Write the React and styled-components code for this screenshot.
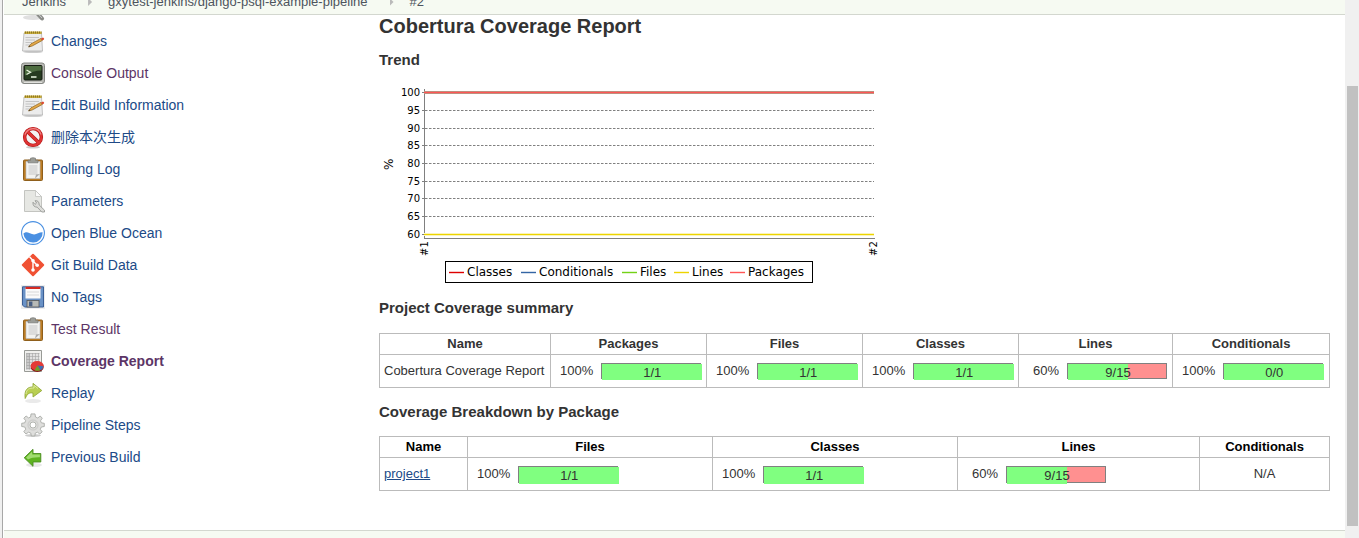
import React from 'react';
import styled, { createGlobalStyle } from 'styled-components';

const Global = createGlobalStyle`
  *, *::before, *::after { box-sizing: border-box; }
  body {
    margin: 0;
    background: #fff;
    color: #333;
    font: 13px/16px "Liberation Sans", Arial, "Noto Sans CJK SC", sans-serif;
  }
`;

const Shell = styled.div`
  display: grid;
  grid-template-columns: minmax(0, 1fr) 14px;
  min-height: 100vh;
  padding-left: 2px;
  background: #f0f0f0;
`;

const Page = styled.div`
  display: flex;
  flex-direction: column;
  padding-left: 1px;
  border-left: 1px solid #a8a8a8;
  background: #fff;
`;

const Breadcrumbs = styled.nav`
  display: flex;
  align-items: flex-end;
  height: 15px;
  padding: 0 18px 4px;
  overflow: hidden;
  background: #f6faf2;
  border-bottom: 1px solid #d3d7cf;
`;

const Crumb = styled.a`
  color: #4d545d;
  text-decoration: none;
`;

const CrumbArrow = styled.span`
  width: 4px;
  height: 8px;
  margin: 0 16px 4px 22px;
  background: #bababa;
  clip-path: polygon(0 0, 100% 50%, 0 100%);
`;

const Body = styled.div`
  display: grid;
  grid-template-columns: 358px minmax(0, 1fr);
  flex: 1;
`;

const Tasks = styled.nav`
  display: flex;
  flex-direction: column;
  padding-left: 17px;
`;

const Task = styled.a`
  display: flex;
  align-items: center;
  gap: 6px;
  height: 32px;
  font-size: 14px;
  font-weight: ${p => (p.$bold ? 700 : 400)};
  color: ${p => (p.$visited ? '#5c3566' : '#204a87')};
  text-decoration: none;
`;

const ScrolledTask = styled.a`
  display: flex;
  align-items: flex-end;
  height: 10px;
  padding-bottom: 4px;
  overflow: hidden;
`;

const Icon = styled.svg`
  width: 24px;
  height: 24px;
  flex: none;
`;

const Main = styled.main`
  padding: 0 15px 39px 17px;
`;

const Title = styled.h1`
  margin: 0;
  font-size: 20px;
  line-height: 22px;
`;

const Heading = styled.h2`
  margin: ${p => p.$top}px 0 ${p => p.$bottom}px;
  font-size: 15px;
  line-height: 18px;
`;

const Chart = styled.svg`
  display: block;
  width: 500px;
  height: 210px;
  font-family: "DejaVu Sans", sans-serif;
`;

const Table = styled.table`
  width: 100%;
  table-layout: fixed;
  border-collapse: collapse;
`;

const Th = styled.th`
  height: 21px;
  padding: 0 4px;
  border: 1px solid #bbb;
  color: ${p => (p.$dark ? '#000' : '#333')};
`;

const Td = styled.td`
  height: 33px;
  padding: 0 4px;
  border: 1px solid #bbb;
  white-space: nowrap;
  text-align: ${p => (p.$center ? 'center' : 'left')};
`;

const PackageLink = styled.a`
  color: #204a87;
  text-decoration: underline;
`;

const Coverage = styled.div`
  display: flex;
  align-items: center;
  gap: 8px;
  padding-left: 5px;
`;

const Percent = styled.span`
  min-width: 31px;
  text-align: right;
`;

const Bar = styled.div`
  width: 100px;
  height: ${p => p.$height}px;
  border: 1px solid #808080;
  background: #ff9090;
`;

const Fill = styled.div`
  height: ${p => p.$height}px;
  background: #80ff80;
`;

const Ratio = styled.div`
  width: 100px;
  line-height: 17px;
  text-align: center;
`;

const Footer = styled.footer`
  height: 8px;
  background: #f6faf2;
  border-top: 1px solid #d3d7cf;
`;

const Track = styled.div`
  position: sticky;
  top: 0;
  display: grid;
  grid-template-rows: 86fr 440fr 12fr;
  height: 100vh;
  padding: 0 1px 0 2px;
  background: #f0f0f0;
`;

const Thumb = styled.div`
  grid-row: 2;
  background: #c1c1c1;
`;

const Notepad = () => (
  <Icon viewBox="0 0 24 24">
    <ellipse cx="12" cy="22.8" rx="10" ry="1.2" fill="#ccc" />
    <path d="M3 4H20.5L21.5 22H1.5Z" fill="#ececec" stroke="#b4b4b4" strokeWidth=".8" />
    <path d="M3.5 2.4H20.5V5H3.3Z" fill="#c9ae3c" />
    <path d="M4 3.4H20.5" stroke="#8d7724" strokeWidth="2" strokeDasharray="1 1" />
    <path d="M4.5 8.5H18M4.5 11H14M4.5 13.5H11M4.5 16H9" stroke="#c4c4c4" />
    <path d="M7.5 18L10 14.8 20 9.4 21.3 11.4 11.2 17Z" fill="#e3a848" stroke="#8b6220" strokeWidth=".7" />
    <path d="M20 9.4L22 8.4Q23.8 9.1 23 10.5L21.3 11.4Z" fill="#dc4a32" />
    <path d="M7.5 18L8.7 16.5 9.3 17.5Z" fill="#333" />
  </Icon>
);

const Terminal = () => (
  <Icon viewBox="0 0 24 24">
    <rect x=".5" y="2" width="23" height="20.5" rx="2.5" fill="#b9bab5" stroke="#858783" />
    <rect x="3" y="4.5" width="18" height="14.5" rx="1" fill="#263b20" stroke="#151b12" />
    <path d="M4 5H20.5V9.5Q12 9.5 4 14.5Z" fill="#4d6c40" />
    <path d="M5.5 9L9.5 11.3 5.5 13.5M10 16H15.5" fill="none" stroke="#e9f5df" strokeWidth="1.3" />
    <path d="M3 21.4H21" stroke="#e5e5e2" />
  </Icon>
);

const Forbidden = () => (
  <Icon viewBox="0 0 24 24">
    <ellipse cx="12" cy="22.2" rx="7" ry="1.4" fill="#ccc" />
    <circle cx="12" cy="12" r="8.4" fill="#f3f3f3" stroke="#b01515" strokeWidth="3.4" />
    <path d="M6 6.2L18 17.8" stroke="#b01515" strokeWidth="3.6" />
    <circle cx="12" cy="12" r="8.4" fill="none" stroke="#df3434" strokeWidth="2.2" />
    <path d="M6 6.2L18 17.8" stroke="#df3434" strokeWidth="2.4" />
    <path d="M4 9.5Q6 4 12 3.6T20 9.5" fill="none" stroke="#ee8585" strokeWidth="1.2" />
  </Icon>
);

const Clipboard = () => (
  <Icon viewBox="0 0 24 24">
    <rect x="2.5" y="3" width="19" height="20.5" rx="1" fill="#bd7d24" stroke="#8f5f1c" />
    <path d="M5 4.5H19V21.5H5Z" fill="#f3f3f1" stroke="#bbb" strokeWidth=".7" />
    <path d="M7.5 8H16.5V18H7.5Z" fill="#dcdcdc" />
    <path d="M14 21.5L15 17.5 19 17Z" fill="#aaa" />
    <path d="M7 5.8V3.2H9.5V1.2Q12 .2 14.5 1.2V3.2H17V5.8Z" fill="#9b9d98" stroke="#747672" strokeWidth=".7" />
  </Icon>
);

const Wrench = () => (
  <Icon viewBox="0 0 24 24">
    <path d="M3.5 1.5H14.5L20.5 7.5V22.5H3.5Z" fill="#e6e7e3" stroke="#c3c4c0" />
    <path d="M14.5 1.5V7.5H20.5Z" fill="#fafafa" stroke="#c3c4c0" strokeWidth=".8" />
    <path d="M12 13.2L14 15.4 15.6 14 14 11.7Q18.2 11.2 18.2 16L23.5 21.2V23H20.8L16.2 18.2Q11.5 18 12 13.2Z" fill="#dcdcd9" stroke="#999b97" strokeWidth=".9" />
  </Icon>
);

const Ocean = () => (
  <Icon viewBox="0 0 24 24">
    <circle cx="12" cy="12" r="11.4" fill="#fff" stroke="#4a90e2" strokeWidth="1.1" />
    <path d="M2.4 12.6C5.4 9.8 8 11.8 11 13C15 14.6 17.5 11 21.6 11.2A9.6 9.6 0 0 1 2.4 12.6Z" fill="#4a90e2" />
  </Icon>
);

const Git = () => (
  <Icon viewBox="0 0 24 24">
    <rect x="3.8" y="3.8" width="16.4" height="16.4" rx="1" transform="rotate(45 12 12)" fill="#f05133" />
    <path d="M8.5 3.8L12 7.5V17M12 8L16.2 12.2" fill="none" stroke="#fff" strokeWidth="1.4" />
    <circle cx="12" cy="7.7" r="1.8" fill="#fff" />
    <circle cx="12" cy="17" r="1.8" fill="#fff" />
    <circle cx="16.2" cy="12.3" r="1.8" fill="#fff" />
  </Icon>
);

const Floppy = () => (
  <Icon viewBox="0 0 24 24">
    <rect width="24" height="24" fill="#ededed" />
    <path d="M1.5 1.8H22.5V22H3.5L1.5 20Z" fill="#6a92c6" stroke="#3b5f96" />
    <path d="M4.5 2.3H19.5V13.5H4.5Z" fill="#fafafa" />
    <path d="M4.5 1.8H19.5V4H4.5Z" fill="#d52b22" />
    <path d="M6 7H18M6 10H18" stroke="#d8d8d8" />
    <rect x="6" y="15.5" width="12" height="6.5" fill="#b8bab6" stroke="#555" strokeWidth=".8" />
    <rect x="8" y="16.5" width="3.4" height="4.8" fill="#495f84" />
  </Icon>
);

const Report = () => (
  <Icon viewBox="0 0 24 24">
    <path d="M3.5 1.5H20.5V22.5H3.5Z" fill="#f0f0ee" stroke="#989a96" />
    <path d="M5.5 4H18.5V20.5H5.5Z" fill="#e2e2e2" />
    <path d="M5.5 4V20.5M8.5 4V20.5M11.5 4V20.5M14.5 4V20.5M17.5 4V20.5M5.5 4.5H18.5M5.5 7.5H18.5M5.5 10.5H18.5M5.5 13.5H18.5M5.5 16.5H18.5M5.5 19.5H18.5" stroke="#a4a4a4" strokeWidth=".6" />
    <path d="M5.5 4H9V20.5H5.5Z" fill="#999" opacity=".35" />
    <ellipse cx="16.2" cy="17.9" rx="6.5" ry="5" fill="#8d1515" />
    <ellipse cx="16.2" cy="16.9" rx="6.5" ry="4.8" fill="#e33a36" />
    <path d="M16.4 16.5L22.5 17.2Q22 20.2 19.3 21.2Z" fill="#3e6fb4" />
    <path d="M16.4 16.5L19.3 21.2Q16.5 22.5 13.6 21.2Z" fill="#69a52b" />
  </Icon>
);

const Redo = () => (
  <Icon viewBox="0 0 24 24">
    <ellipse cx="12" cy="20" rx="8" ry="2" fill="#eaeaea" />
    <path d="M4.2 17.5C3 9 6.5 5.8 12 6V2.3L20.8 9.5 12 16V12C8 11.5 6.5 12.5 4.2 17.5Z" fill="#b9cf52" stroke="#94aa3c" strokeWidth=".9" />
    <path d="M5 13C5.5 8 8.5 7 13 7V4.3L17 7.5" fill="none" stroke="#dce89e" strokeWidth="1" />
  </Icon>
);

const Gear = () => (
  <Icon viewBox="0 0 24 24">
    <ellipse cx="12" cy="22.4" rx="8" ry="1.4" fill="#ccc" />
    <path d="M10 .9H14L14.5 4 16.8 5 19.2 3 21.3 5.2 19.5 7.8 20.3 9.8 23.3 10.3V13.5L20.3 14 19.3 16.3 21.2 18.8 18.8 21 16.4 19.2 14.3 20.1 13.8 23H10.3L9.8 20.1 7.5 19.2 5 21 2.8 18.7 4.7 16.2 3.8 14 .7 13.5V10.3L3.8 9.8 4.6 7.6 2.8 5.2 5.1 3 7.6 4.9 9.6 4Z" fill="#dededc" stroke="#a2a4a0" strokeWidth=".8" />
    <circle cx="12" cy="12" r="5" fill="none" stroke="#cfcfcd" strokeWidth="1.4" />
    <circle cx="12" cy="12" r="3" fill="#fff" stroke="#a2a4a0" strokeWidth=".8" />
  </Icon>
);

const BackArrow = () => (
  <Icon viewBox="0 0 24 24">
    <ellipse cx="13" cy="20" rx="8" ry="2" fill="#e8e8e8" />
    <path d="M3.2 12.8L12 4.3V8.5H19.8V17H12V21.3Z" fill="#5fb321" stroke="#4a8c20" strokeWidth=".9" />
    <path d="M5 12.6L11.2 6.5V9.5H18.9V12.3Q11 12.1 7 14.5Z" fill="#a1dc70" />
  </Icon>
);

const Magnifier = () => (
  <Icon viewBox="0 0 24 24">
    <ellipse cx="12" cy="20.5" rx="10" ry="2.4" fill="#e0e0e0" />
    <circle cx="10" cy="10" r="7" fill="#eef3f8" stroke="#999" strokeWidth="2" />
    <path d="M15 15L21 21.5" stroke="#8a8c88" strokeWidth="4" strokeLinecap="round" />
    <path d="M16 15.5L21 21" stroke="#ccc" strokeWidth="1" />
  </Icon>
);

const tasks = [
  [Notepad, 'Changes'],
  [Terminal, 'Console Output', true],
  [Notepad, 'Edit Build Information'],
  [Forbidden, '删除本次生成'],
  [Clipboard, 'Polling Log'],
  [Wrench, 'Parameters'],
  [Ocean, 'Open Blue Ocean'],
  [Git, 'Git Build Data'],
  [Floppy, 'No Tags'],
  [Clipboard, 'Test Result', true],
  [Report, 'Coverage Report', true, true],
  [Redo, 'Replay'],
  [Gear, 'Pipeline Steps'],
  [BackArrow, 'Previous Build'],
];

const gridLines = [
  [100, 15], [95, 33], [90, 51], [85, 68], [80, 86], [75, 104], [70, 121], [65, 139], [60, 157],
];

const legend = [
  ['Classes', '#d00', 70],
  ['Conditionals', '#3465a4', 142],
  ['Files', '#73d216', 243],
  ['Lines', '#edd400', 295],
  ['Packages', '#f55', 351],
];

const TrendChart = () => (
  <Chart viewBox="0 0 500 210" role="img" aria-label="Coverage trend">
    {gridLines.map(([value, y]) => (
      <g key={value}>
        <path d={`M43 ${y + 0.5}H45`} stroke="#808080" />
        <path d={`M46 ${y + 0.5}H495`} stroke="#c0c0c0" strokeDasharray="3 1" />
        <path d={`M46 ${y + 0.5}H495`} stroke="#808080" strokeDasharray="2 2" />
        <text x="41" y={y + 4} fontSize="10" textAnchor="end">{value}</text>
      </g>
    ))}
    <path d="M45.5 12V162M45 161.5H496" stroke="#808080" fill="none" />
    <path d="M45 15.5H495" stroke="#bd8f7e" strokeWidth="3" />
    <path d="M45 15.5H495" stroke="#f55" />
    <path d="M45 157.5H495" stroke="#fbf4b8" strokeWidth="3" />
    <path d="M45 157.5H495" stroke="#edd400" />
    <text transform="translate(14 93) rotate(-90)" fontSize="12">%</text>
    <text transform="translate(49 179) rotate(-90)" fontSize="10">#1</text>
    <text transform="translate(498 179) rotate(-90)" fontSize="10">#2</text>
    <rect x="66.5" y="184.5" width="367" height="21" fill="#fff" stroke="#000" />
    {legend.map(([name, color, x]) => (
      <g key={name}>
        <path d={`M${x} 195.5h15`} stroke={color} strokeWidth="3" opacity=".2" />
        <path d={`M${x} 195.5h15`} stroke={color} />
        <text x={x + 18} y="199" fontSize="12">{name}</text>
      </g>
    ))}
  </Chart>
);

const CoverageCell = ({ percent, ratio, height }) => (
  <Td>
    <Coverage>
      <Percent>{percent}%</Percent>
      <Bar $height={height}>
        <Fill $height={height} style={{ width: percent }}>
          <Ratio>{ratio}</Ratio>
        </Fill>
      </Bar>
    </Coverage>
  </Td>
);

const CoverageTable = ({ columns, name, cells, barHeight, dark }) => (
  <Table>
    <colgroup>
      {columns.map(([title, width]) => <col key={title} width={width} />)}
    </colgroup>
    <thead>
      <tr>{columns.map(([title]) => <Th key={title} scope="col" $dark={dark}>{title}</Th>)}</tr>
    </thead>
    <tbody>
      <tr>
        <Td>{name}</Td>
        {cells.map((cell, i) => (cell
          ? <CoverageCell key={i} percent={cell[0]} ratio={cell[1]} height={barHeight} />
          : <Td key={i} $center>N/A</Td>))}
      </tr>
    </tbody>
  </Table>
);

export default function App() {
  return (
    <Shell>
      <Global />
      <Page>
        <Breadcrumbs aria-label="Breadcrumb">
          <Crumb href="#jenkins">Jenkins</Crumb>
          <CrumbArrow />
          <Crumb href="#pipeline">gxytest-jenkins/django-psql-example-pipeline</Crumb>
          <CrumbArrow />
          <Crumb href="#build">#2</Crumb>
        </Breadcrumbs>
        <Body>
          <Tasks aria-label="Build">
            <ScrolledTask href="#status" aria-label="Status"><Magnifier /></ScrolledTask>
            {tasks.map(([TaskIcon, label, visited, bold]) => (
              <Task key={label} href="#task" $visited={visited} $bold={bold}>
                <TaskIcon />
                {label}
              </Task>
            ))}
          </Tasks>
          <Main>
            <Title>Cobertura Coverage Report</Title>
            <Heading $top={14} $bottom={8}>Trend</Heading>
            <TrendChart />
            <Heading $top={12} $bottom={16}>Project Coverage summary</Heading>
            <CoverageTable
              columns={[['Name', 171], ['Packages', 156], ['Files', 156], ['Classes', 156], ['Lines', 154], ['Conditionals', 157]]}
              name="Cobertura Coverage Report"
              cells={[[100, '1/1'], [100, '1/1'], [100, '1/1'], [60, '9/15'], [100, '0/0']]}
              barHeight={16}
            />
            <Heading $top={15} $bottom={15}>Coverage Breakdown by Package</Heading>
            <CoverageTable
              dark
              columns={[['Name', 88], ['Files', 245], ['Classes', 245], ['Lines', 242], ['Conditionals', 130]]}
              name={<PackageLink href="#project1">project1</PackageLink>}
              cells={[[100, '1/1'], [100, '1/1'], [60, '9/15'], null]}
              barHeight={17}
            />
          </Main>
        </Body>
        <Footer />
      </Page>
      <Track>
        <Thumb />
      </Track>
    </Shell>
  );
}
